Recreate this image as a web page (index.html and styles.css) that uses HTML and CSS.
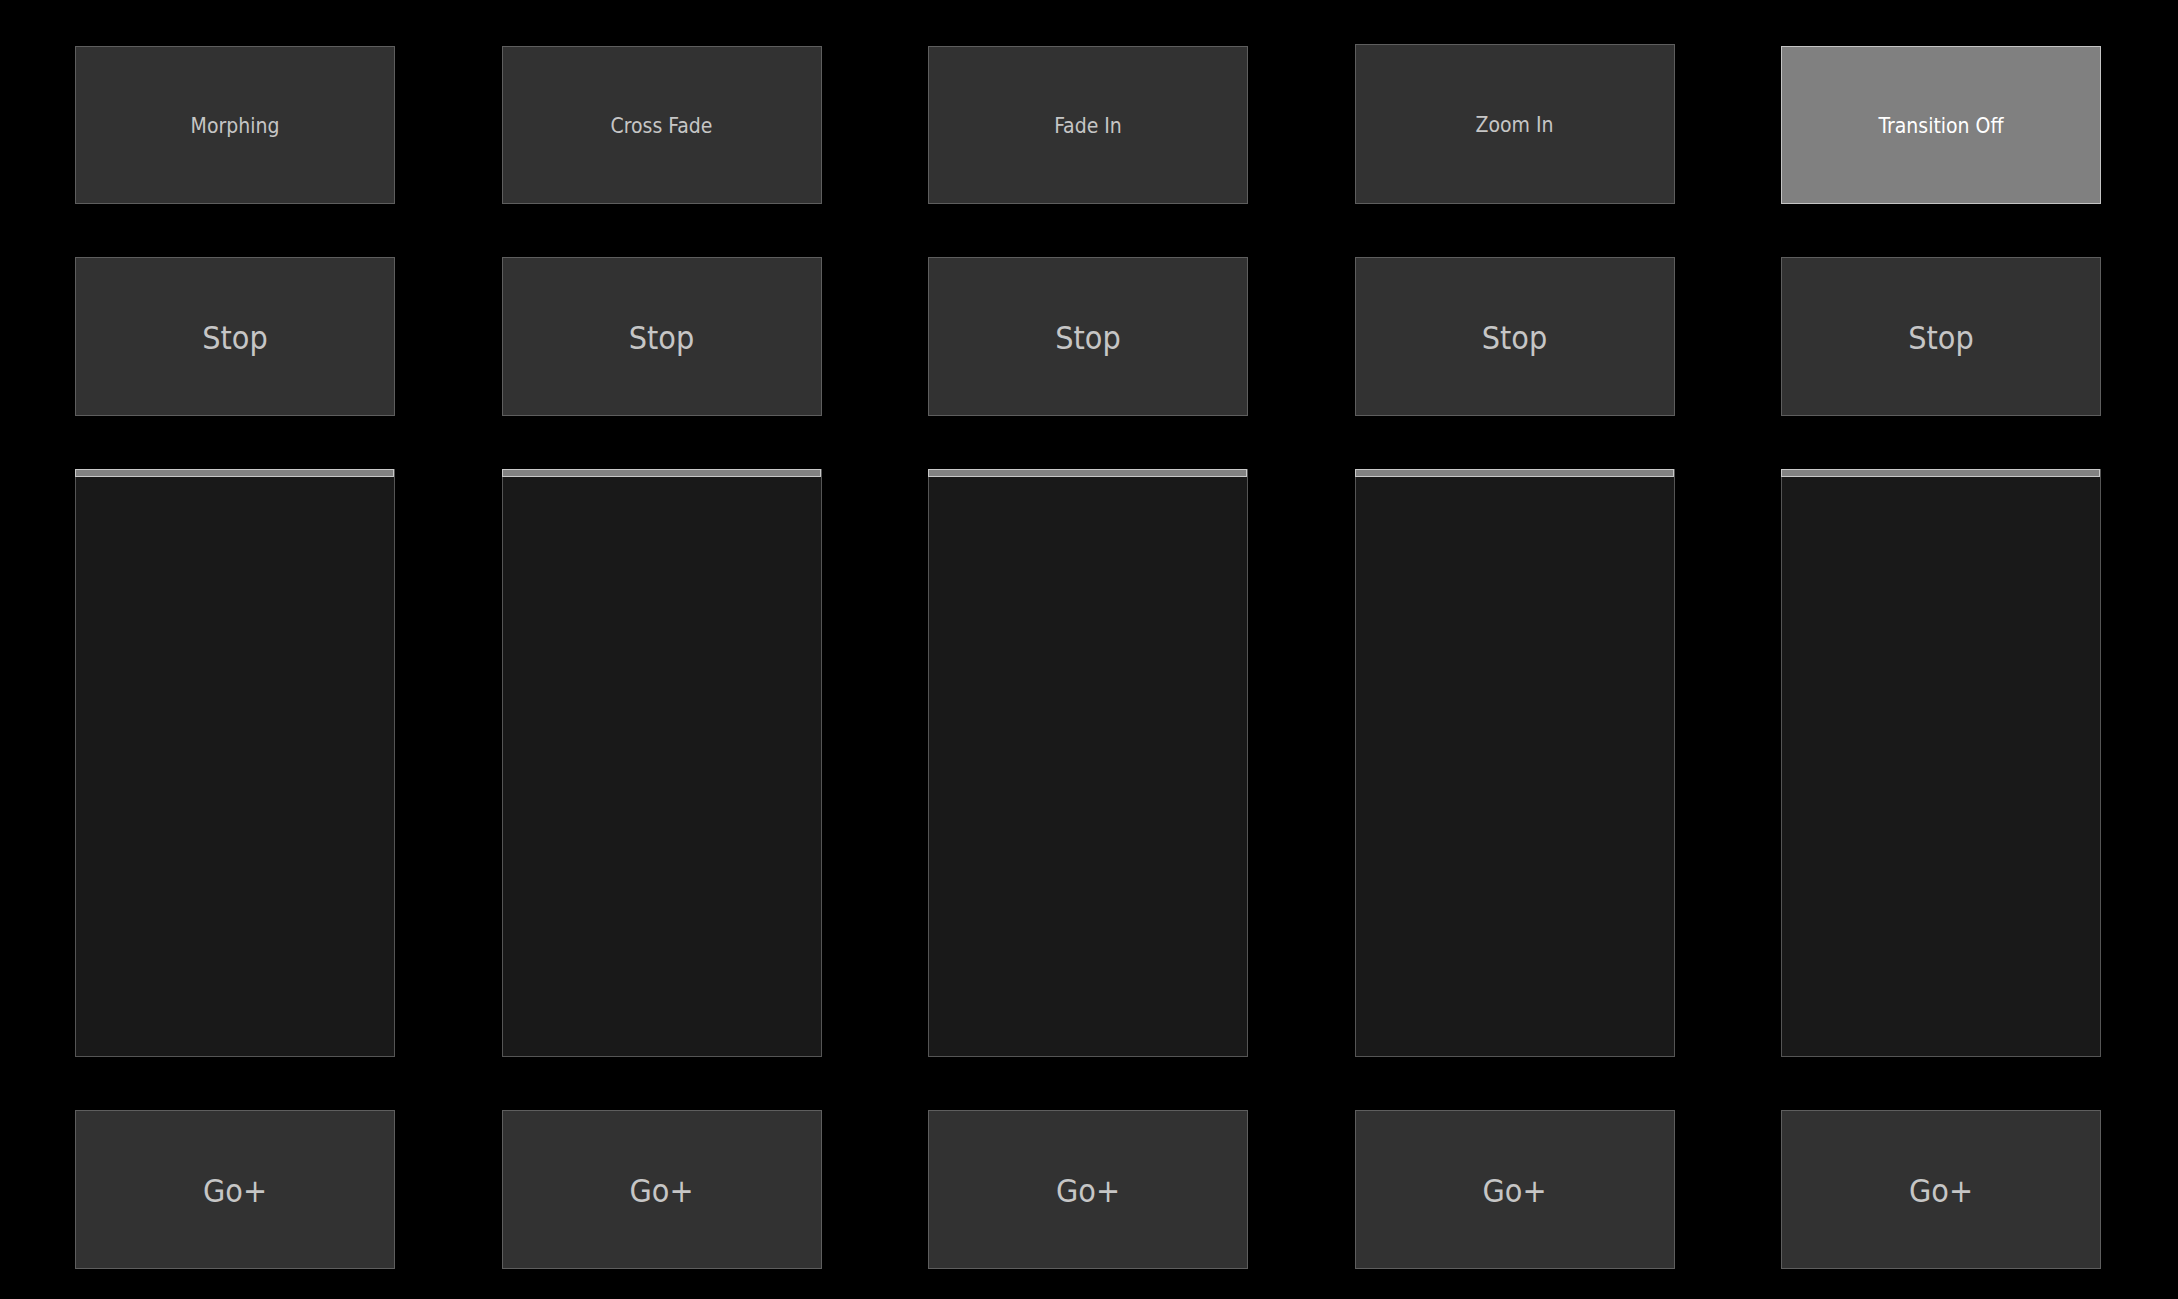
FILE: index.html
```html
<!DOCTYPE html>
<html lang="en">
<head>
<meta charset="utf-8">
<title>Playback Faders</title>
<link rel="stylesheet" href="styles.css">
</head>
<body>
<main class="board">
  <section class="strip">
    <div class="btn mode">Morphing</div>
    <div class="btn big">Stop</div>
    <div class="fader"><div class="fader-cap"></div></div>
    <div class="btn big">Go+</div>
  </section>
  <section class="strip">
    <div class="btn mode">Cross Fade</div>
    <div class="btn big">Stop</div>
    <div class="fader"><div class="fader-cap"></div></div>
    <div class="btn big">Go+</div>
  </section>
  <section class="strip">
    <div class="btn mode">Fade In</div>
    <div class="btn big">Stop</div>
    <div class="fader"><div class="fader-cap"></div></div>
    <div class="btn big">Go+</div>
  </section>
  <section class="strip">
    <div class="btn mode tall">Zoom In</div>
    <div class="btn big">Stop</div>
    <div class="fader"><div class="fader-cap"></div></div>
    <div class="btn big">Go+</div>
  </section>
  <section class="strip">
    <div class="btn mode active">Transition Off</div>
    <div class="btn big">Stop</div>
    <div class="fader"><div class="fader-cap"></div></div>
    <div class="btn big">Go+</div>
  </section>
</main>
</body>
</html>
```

FILE: styles.css
```css
html, body {
  margin: 0;
  padding: 0;
  background: #000;
  height: 100%;
}

body {
  font-family: "DejaVu Sans", "Liberation Sans", sans-serif;
  font-stretch: condensed;
  overflow: hidden;
}

.board {
  display: flex;
  gap: 106.5px;
  padding: 46px 0 0 75px;
}

.strip {
  width: 320px;
  display: flex;
  flex-direction: column;
  gap: 53px;
}

.btn {
  box-sizing: border-box;
  display: flex;
  align-items: center;
  justify-content: center;
  background: #323232;
  border: 1px solid #5e5e5e;
  color: #c6c6c6;
  height: 159px;
}

.mode {
  height: 158px;
  font-size: 21px;
  padding-top: 2px;
}

.mode.tall {
  height: 160px;
  margin-top: -2px;
}

.mode.active {
  background: #808080;
  border-color: #c4c4c4;
  color: #ffffff;
}

.big {
  font-size: 32px;
  padding-top: 2px;
}

.fader {
  box-sizing: border-box;
  height: 588px;
  background: #191919;
  border: 1px solid #555;
  border-top: none;
}

.fader-cap {
  box-sizing: border-box;
  height: 8px;
  margin: 0 0 0 -1px;
  width: calc(100% + 1px);
  background: #828282;
  border: 1px solid #c8c8c8;
}
```
